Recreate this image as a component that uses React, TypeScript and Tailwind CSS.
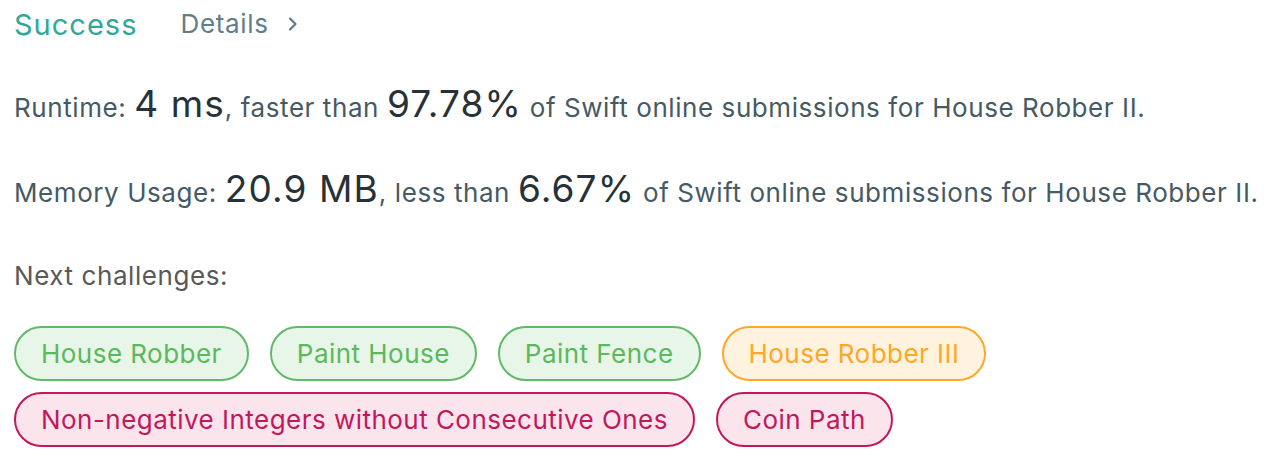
import React from "react";

const pills: { label: string; tone: "green" | "orange" | "pink" }[] = [
  { label: "House Robber", tone: "green" },
  { label: "Paint House", tone: "green" },
  { label: "Paint Fence", tone: "green" },
  { label: "House Robber III", tone: "orange" },
  { label: "Non-negative Integers without Consecutive Ones", tone: "pink" },
  { label: "Coin Path", tone: "pink" },
];

const toneClass = {
  green: "bg-[#e8f5e9] border-[#62b966] text-[#5cb85c]",
  orange: "bg-[#fff3e0] border-[#ffa726] text-[#ffa726]",
  pink: "bg-[#fce4ec] border-[#c2185b] text-[#c2185b]",
};

const big = "text-[37px] tracking-[0.03em] text-[#263238]";

export default function App() {
  return (
    <div className="w-[1264px] h-[464px] bg-white px-[14px] font-['Inter','Liberation_Sans',sans-serif] overflow-hidden">
      <div className="flex items-center h-[48px]">
        <span className="text-[29px] tracking-[0.035em] text-[#2fa899] leading-none">Success</span>
        <span className="ml-[43px] text-[26px] tracking-[0.025em] text-[#607d8b] leading-none flex items-center">
          Details
          <svg className="ml-[19px]" width="10" height="16" viewBox="0 0 10 16" fill="none">
            <path d="M2 2.5 L7.5 8 L2 13.5" stroke="#607d8b" strokeWidth="2.2" strokeLinecap="round" strokeLinejoin="round" />
          </svg>
        </span>
      </div>
      <div className="mt-[36px] text-[26px] tracking-[0.022em] text-[#455a64] leading-[40px] whitespace-nowrap">
        Runtime: <span className={big}>4 ms</span>, faster than{" "}
        <span className={big}>97.78%</span> of Swift online submissions for House Robber II.
      </div>
      <div className="mt-[41px] text-[26px] tracking-[0.022em] text-[#455a64] leading-[40px] whitespace-nowrap">
        Memory Usage: <span className={big}>20.9 MB</span>, less than{" "}
        <span className={big}>6.67%</span> of Swift online submissions for House Robber II.
      </div>
      <div className="mt-[43px] text-[26px] tracking-[0.022em] text-[#595959] leading-[40px]">Next challenges:</div>
      <div className="mt-[30px] flex flex-wrap gap-x-[21px] gap-y-[11px]">
        {pills.map((p) => (
          <span
            key={p.label}
            className={`h-[55px] px-[25px] rounded-full border-2 flex items-center text-[26px] tracking-[0.018em] ${toneClass[p.tone]}`}
          >
            {p.label}
          </span>
        ))}
      </div>
    </div>
  );
}
